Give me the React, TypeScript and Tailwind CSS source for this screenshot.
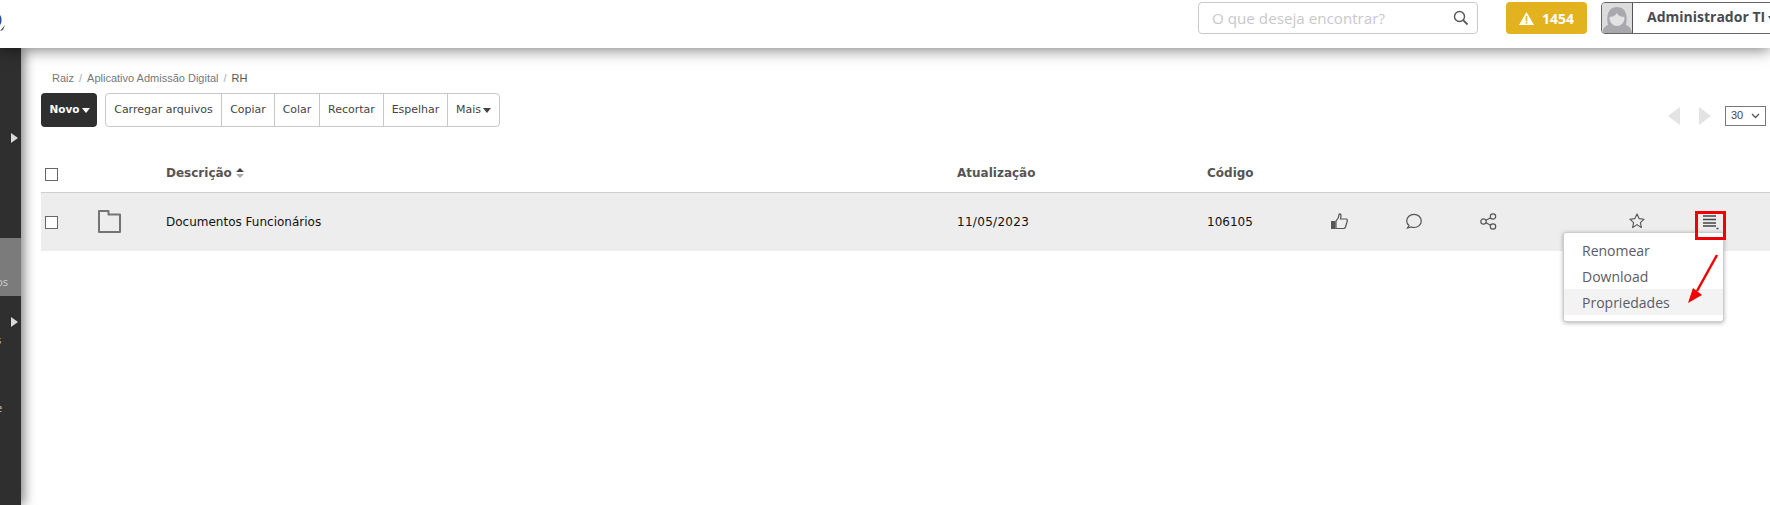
import React from "react";

const Caret = () => (
  <svg width="8" height="5" viewBox="0 0 8 5" className="ml-[2px]"><path d="M0 0h8L4 5z" fill="currentColor" /></svg>
);

const tools = [
  { t: "Carregar arquivos", w: "w-[116px]" },
  { t: "Copiar", w: "w-[53px]" },
  { t: "Colar", w: "w-[45px]" },
  { t: "Recortar", w: "w-[64px]" },
  { t: "Espelhar", w: "w-[64px]" },
];

export default function App() {
  return (
    <div className="relative w-[1770px] h-[505px] overflow-hidden bg-white font-['Open_Sans',sans-serif]">
      <header className="relative z-20 h-[48px] bg-white shadow-[0_2px_14px_rgba(0,0,0,0.5)] flex items-start pt-[2px]">
        <svg width="9" height="18" viewBox="0 0 9 18" className="mt-[13px] shrink-0">
          <path d="M0 0c2 2 2 8 0 10z" fill="#2a4f9a" />
          <path d="M0 16l5-6-2 5z" fill="#555" />
        </svg>
        <div className="ml-[1189px] w-[280px] shrink-0 h-[32px] border border-[#c9c9c9] rounded-[4px] flex items-center justify-between pl-[13px] pr-[8px] text-[15.200px] text-[#c8c8cc] whitespace-nowrap">
          <span>O que deseja encontrar?</span>
          <svg width="16" height="16" viewBox="0 0 16 16" fill="none" stroke="#555" strokeWidth="1.400"><circle cx="6.500" cy="6.500" r="5" /><path d="M10.200 10.200L14.500 14.500" strokeWidth="1.800" /></svg>
        </div>
        <div className="ml-[28px] w-[81px] shrink-0 h-[32px] rounded-[4px] bg-[#e3b31f] text-white font-bold text-[14px] flex items-center justify-center gap-[8px]">
          <svg width="15" height="13" viewBox="0 0 15 13"><path fillRule="evenodd" d="M7.500 0l7.500 13H0zM6.700 4h1.600v5H6.700zM6.700 10h1.600v1.600H6.700z" fill="white" /></svg>
          1454
        </div>
        <div className="ml-[14px] flex h-[32px] w-[300px] shrink-0 border border-[#666] rounded-l-[4px] overflow-hidden">
          <div className="w-[31px] shrink-0 bg-[#dcdcdc] border-r border-[#555] overflow-hidden">
            <svg width="30" height="30" viewBox="0 0 30 30">
              <path d="M0 30c1-5 3-7 6-8-2-9 0-18 9-18s11 9 9 18c3 1 5 3 6 8z" fill="#a9a9ad" />
              <ellipse cx="15" cy="15.500" rx="7.500" ry="7.500" fill="#e2e2e2" />
              <path d="M7 14c3 0 6-1 8-4 1 3 5 4 8 4-1-6-3-9-8-9s-7 3-8 9z" fill="#a9a9ad" />
            </svg>
          </div>
          <span className="pl-[14px] text-[14px] font-bold text-[#4a4a52] leading-[28px] whitespace-nowrap">Administrador TI</span>
          <svg width="6" height="5" viewBox="0 0 6 5" className="ml-[3px] mt-[13px] shrink-0"><path d="M0 0h6L3 5z" fill="#4a4a52" /></svg>
        </div>
      </header>

      <div className="flex h-[457px]">
        <aside className="relative z-10 w-[21px] shrink-0 bg-[#2f2f2f] shadow-[3px_0_12px_rgba(0,0,0,0.5)] flex flex-col text-[11px] text-[#cfcfcf] overflow-hidden">
          <div className="h-[190px] shrink-0 flex justify-end pt-[85px] pr-[3px]"><ArrowRight /></div>
          <div className="h-[58px] shrink-0 bg-[#7b7b7b] flex items-end justify-end pb-[9px] pr-[13px] leading-none whitespace-nowrap"><span>os</span></div>
          <div className="h-[35px] shrink-0 flex justify-end pt-[21px] pr-[3px]"><ArrowRight /></div>
          <div className="h-[25px] shrink-0 pt-[3px] -ml-[4px] leading-none">s</div>
          <div className="pt-[46px] -ml-[4px] leading-none">e</div>
        </aside>

        <main className="flex-1 min-w-0 pl-[20px]">
          <nav className="pt-[20px] pl-[11px] h-[45px] text-[11px] text-[#777] font-['Liberation_Sans',sans-serif] flex gap-[5px] items-start leading-[20px]">
            <span>Raiz</span><span className="text-[#aaa]">/</span>
            <span>Aplicativo Admissão Digital</span><span className="text-[#aaa]">/</span>
            <span className="text-[#555]">RH</span>
          </nav>

          <div className="flex items-center justify-between pr-[4px]">
            <div className="flex items-center text-[11px] font-['DejaVu_Sans',sans-serif]">
              <button className="h-[34px] w-[56px] pl-[1px] bg-[#2f2f2f] text-white text-[10.500px] font-bold rounded-[4px] flex items-center justify-center">Novo<Caret /></button>
              <div className="ml-[8px] flex h-[34px] border border-[#c8c8c8] rounded-[4px] text-[#444]">
                {tools.map((x) => (
                  <span key={x.t} className={`${x.w} flex items-center justify-center border-r border-[#c8c8c8]`}>{x.t}</span>
                ))}
                <span className="w-[51px] flex items-center justify-center">Mais<Caret /></span>
              </div>
            </div>
            <div className="flex items-center mt-[11px]">
              <svg width="12" height="18" viewBox="0 0 12 18" className="mr-[19px]"><path d="M12 0v18L0 9z" fill="#e3e3e3" /></svg>
              <svg width="12" height="18" viewBox="0 0 12 18" className="mr-[14px]"><path d="M0 0v18l12-9z" fill="#e3e3e3" /></svg>
              <div className="w-[41px] h-[20px] border border-[#777] flex items-center justify-between pl-[5px] pr-[5px] text-[11px] text-[#444] font-['Liberation_Sans',sans-serif]">
                30
                <svg width="9" height="6" viewBox="0 0 9 6" fill="none" stroke="#555" strokeWidth="1.300"><path d="M1 1l3.500 3.500L8 1" /></svg>
              </div>
            </div>
          </div>

          <div className="mt-[20px] h-[46px] pt-[6px] flex items-center border-b border-[#cfcfcf] text-[12px] font-bold text-[#555] font-['DejaVu_Sans',sans-serif]">
            <div className="w-[125px] pl-[4px] shrink-0"><div className="w-[13px] h-[13px] border border-[#666] bg-white mt-[4px]" /></div>
            <div className="w-[791px] flex items-center gap-[4px] shrink-0">
              Descrição
              <svg width="8" height="10" viewBox="0 0 8 10"><path d="M4 0l4 4H0z" fill="#444" /><path d="M4 10L0 6h8z" fill="#aaa" /></svg>
            </div>
            <div className="w-[250px] shrink-0">Atualização</div>
            <div>Código</div>
          </div>

          <div className="relative h-[58px] bg-[#ededed] flex items-center text-[12px] text-[#111] font-['DejaVu_Sans',sans-serif]">
            <div className="w-[57px] pl-[4px] shrink-0"><div className="w-[13px] h-[13px] border border-[#666] bg-white" /></div>
            <div className="w-[68px] shrink-0 -mt-[2px]">
              <svg width="23" height="23" viewBox="0 0 23 23" fill="none" stroke="#747474" strokeWidth="2" strokeLinejoin="round"><path d="M1 1h9.500v3.500H22V22H1z" /></svg>
            </div>
            <div className="w-[791px] shrink-0">Documentos Funcionários</div>
            <div className="w-[250px] shrink-0 tracking-[0.3px]">11/05/2023</div>
            <div className="w-[124px] shrink-0">106105</div>
            <div className="w-[75px] shrink-0 -mt-[2px]">
              <svg width="17" height="17" viewBox="0 0 17 17" fill="none" stroke="#555" strokeWidth="1.200"><rect x="0" y="8" width="4.500" height="8" fill="#555" stroke="none" /><path d="M5 8C7 6 8 4 8 1.500c0-1 2-1 2 1 0 1.500-.5 3-.5 3.500H15c1.500 0 1.500 1.500 1 3l-1.500 5c-.3 1-1 1.500-2 1.500H5z" /></svg>
            </div>
            <div className="w-[74px] shrink-0 -mt-[2px]">
              <svg width="16" height="16" viewBox="0 0 16 16" fill="none" stroke="#555" strokeWidth="1.200"><path d="M3 12.500C1.500 11.300.7 9.700.7 8c0-3.700 3.300-6.700 7.300-6.700s7.300 3 7.300 6.700-3.300 6.500-7.300 6.500c-1 0-2-.2-2.800-.5L1.500 15z" /></svg>
            </div>
            <div className="w-[149px] shrink-0 -mt-[2px]">
              <svg width="17" height="17" viewBox="0 0 17 17" fill="none" stroke="#555" strokeWidth="1.200"><circle cx="3.500" cy="8.500" r="2.700" /><circle cx="13" cy="3.500" r="2.700" /><circle cx="13" cy="13.500" r="2.700" /><path d="M6 7.200l4.600-2.500M6 9.800l4.600 2.500" /></svg>
            </div>
            <div className="w-[66px] shrink-0 -mt-[3px]">
              <svg width="16" height="15" viewBox="0 0 16 15" fill="none" stroke="#555" strokeWidth="1.100" strokeLinejoin="round"><path d="M8 1l2.100 4.600 5 .6-3.700 3.400 1 5L8 11.600 3.600 14.600l1-5L.900 6.200l5-.6z" /></svg>
            </div>
            <div className="relative z-20 w-[31px] h-[29px] mt-[7px] border-[3px] border-[#f00000] shrink-0 flex justify-center pt-[1px]">
              <svg width="17" height="15" viewBox="0 0 17 15" fill="none" stroke="#444" strokeWidth="1.500"><path d="M1 1h13M1 4.500h13M1 8h13M1 11h13" /><path d="M14.500 13.500h2" /></svg>
            </div>

            <div className="absolute z-10 left-[1522px] top-[39px] w-[161px] pt-[4px] pb-[6px] bg-white border border-[#ccc] rounded-[3px] shadow-[0_1px_4px_rgba(0,0,0,0.3)] text-[14px] text-[#5b5b66] font-['Open_Sans',sans-serif]">
              <div className="h-[26px] pl-[18px] flex items-center">Renomear</div>
              <div className="h-[26px] pl-[18px] flex items-center">Download</div>
              <div className="h-[26px] pl-[18px] flex items-center bg-[#f3f3f3]">Propriedades</div>
            </div>
          </div>
        </main>
      </div>

      <svg className="absolute z-30 left-[1680px] top-[250px]" width="45" height="60" viewBox="0 0 45 60">
        <path d="M37 5L17 41" stroke="#f00000" strokeWidth="2.500" fill="none" />
        <path d="M8 53l5-15 9 7z" fill="#f00000" />
      </svg>
    </div>
  );
}

function ArrowRight() {
  return <svg width="7" height="10" viewBox="0 0 7 10"><path d="M0 0v10l7-5z" fill="#d8d8d8" /></svg>;
}
